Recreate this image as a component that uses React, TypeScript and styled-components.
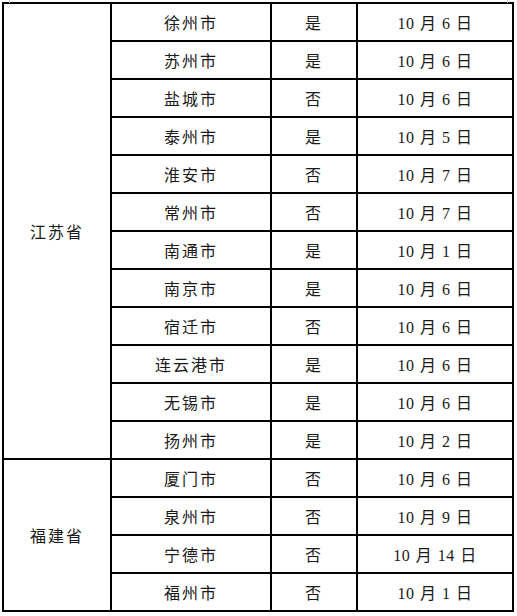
import styled, { createGlobalStyle } from "styled-components";

const GlobalStyle = createGlobalStyle`
  html, body {
    margin: 0;
    padding: 0;
    background: #ffffff;
  }
`;

const Page = styled.div`
  position: relative;
  width: 517px;
  height: 616px;
  padding: 2px 0 0 2px;
  box-sizing: border-box;
  background: #fff;
`;

const CornerMark = styled.span<{ $left: number }>`
  position: absolute;
  top: 0;
  left: ${(p) => p.$left}px;
  width: 1px;
  height: 3px;
  background: #c8c8c8;
`;

const Table = styled.table`
  border-collapse: collapse;
  table-layout: fixed;
  font-family: "Liberation Serif", "Noto Sans CJK SC", serif;
  font-size: 16px;
  color: #1a1a1a;
`;

const Cell = styled.td<{ $w?: number }>`
  border: 2px solid #000;
  height: 36px;
  padding: 0;
  text-align: center;
  vertical-align: middle;
  letter-spacing: 2px;
  ${(p) => (p.$w ? `width: ${p.$w}px;` : "")}
`;

const DateText = styled.span`
  letter-spacing: 0.5px;
  word-spacing: 1px;
`;

type Row = [string, string, string];

const jiangsu: Row[] = [
  ["徐州市", "是", "6"],
  ["苏州市", "是", "6"],
  ["盐城市", "否", "6"],
  ["泰州市", "是", "5"],
  ["淮安市", "否", "7"],
  ["常州市", "否", "7"],
  ["南通市", "是", "1"],
  ["南京市", "是", "6"],
  ["宿迁市", "否", "6"],
  ["连云港市", "是", "6"],
  ["无锡市", "是", "6"],
  ["扬州市", "是", "2"],
];

const fujian: Row[] = [
  ["厦门市", "否", "6"],
  ["泉州市", "否", "9"],
  ["宁德市", "否", "14"],
  ["福州市", "否", "1"],
];

const groups: { name: string; rows: Row[] }[] = [
  { name: "江苏省", rows: jiangsu },
  { name: "福建省", rows: fujian },
];

export default function App() {
  return (
    <>
      <GlobalStyle />
      <Page>
        <CornerMark $left={9} />
        <CornerMark $left={507} />
        <Table>
          <colgroup>
            <col style={{ width: 108 }} />
            <col style={{ width: 160 }} />
            <col style={{ width: 86 }} />
            <col style={{ width: 156 }} />
          </colgroup>
          <tbody>
            {groups.map((g) =>
              g.rows.map((r, i) => (
                <tr key={g.name + r[0]}>
                  {i === 0 && <Cell rowSpan={g.rows.length}>{g.name}</Cell>}
                  <Cell>{r[0]}</Cell>
                  <Cell>{r[1]}</Cell>
                  <Cell>
                    <DateText>10 月 {r[2]} 日</DateText>
                  </Cell>
                </tr>
              ))
            )}
          </tbody>
        </Table>
      </Page>
    </>
  );
}
